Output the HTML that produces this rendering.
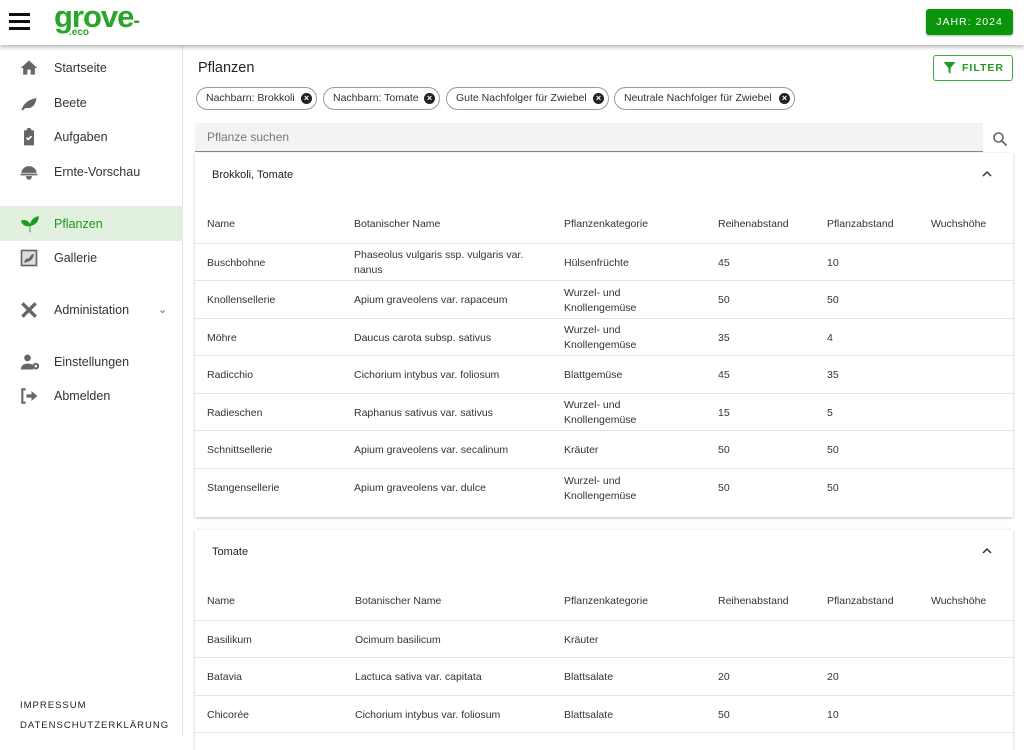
<!DOCTYPE html>
<html><head><meta charset="utf-8"><style>
*{box-sizing:border-box;margin:0;padding:0}
body{width:1024px;height:736px;overflow:hidden;background:#fff;font-family:"Liberation Sans",sans-serif;color:#222;position:relative}
.hdr{position:absolute;left:0;top:0;width:1024px;height:45px;background:#fff;box-shadow:0 2px 4px rgba(0,0,0,.3);z-index:5}
.side{position:absolute;left:0;top:45px;width:183px;height:691px;border-right:1px solid #e4e4e4}
.mi{position:absolute;left:0;width:183px;height:35px;font-size:12.5px;color:#333;display:flex;align-items:center}
.mi span{position:absolute;left:54px}
.mi svg{position:absolute;left:19px}
.act{background:#e2f1df;color:#1f9a1f}
.foot{position:absolute;left:20px;font-size:9.5px;letter-spacing:1px;color:#222}
.chip{position:absolute;top:87px;height:23px;border:1px solid #9a9a9a;border-radius:12px;font-size:10.5px;line-height:21px;padding-left:9px;color:#333;white-space:nowrap}
.chip i{position:absolute;right:4px;top:5px;width:11px;height:11px;border-radius:50%;background:#222;color:#fff;font-style:normal;font-size:9px;line-height:11px;text-align:center;font-weight:bold}
.card{position:absolute;left:195px;width:818px;background:#fff;box-shadow:0 1px 3px rgba(0,0,0,.25)}
.ct{position:absolute;left:17px;font-size:11px;color:#222}
table{position:absolute;left:0;width:818px;border-collapse:collapse;font-size:10.5px;color:#333}
td{padding:0 0 0 12px;vertical-align:middle;border-bottom:1px solid #e4e4e4;line-height:15px}
thead td{height:40px;padding-top:3px}
tbody td{height:37.5px;padding-top:3px}
</style></head><body>
<div class="hdr">
 <div style="position:absolute;left:9px;top:13px;width:21px;height:3px;background:#111;box-shadow:0 7px 0 #111,0 14px 0 #111"></div>
 <div style="position:absolute;left:54px;top:0px;font-size:31px;font-weight:bold;color:#27a627;letter-spacing:-1px;line-height:34px">grove<span style="font-size:20px">-</span></div>
 <div style="position:absolute;left:69px;top:27px;font-size:10px;color:#27a627;font-weight:bold">.eco</div>
 <div style="position:absolute;left:926px;top:9px;width:87px;height:26px;background:#0a940a;border-radius:3px;color:#fff;font-size:10.5px;letter-spacing:1px;text-align:center;line-height:26px;box-shadow:0 1px 2px rgba(0,0,0,.3)">JAHR: 2024</div>
</div>
<div class="side">
 <div class="mi" style="top:5px"><svg width="20" height="20" viewBox="0 0 24 24"><path d="M10 20v-6h4v6h5v-8h3L12 3 2 12h3v8z" fill="#666"/></svg><span>Startseite</span></div>
 <div class="mi" style="top:40px"><svg width="20" height="20" viewBox="0 0 24 24"><path d="M3 20c3-8 8-12 18-14-1 9-6 13-12 12-2 0-3 1-4 3z" fill="#666"/></svg><span>Beete</span></div>
 <div class="mi" style="top:74px"><svg width="20" height="20" viewBox="0 0 24 24"><path d="M6 4h3a3 3 0 016 0h3v18H6z" fill="#666"/><path d="M9 13l2 2 4-4" stroke="#fff" stroke-width="2" fill="none"/></svg><span>Aufgaben</span></div>
 <div class="mi" style="top:109px"><svg width="20" height="20" viewBox="0 0 24 24"><path d="M3 13a9 8 0 0118 0zM2 14h20v2H2zM8 17h8l-2 4h-4z" fill="#666"/></svg><span>Ernte-Vorschau</span></div>
 <div class="mi act" style="top:161px"><svg width="22" height="20" viewBox="0 0 24 24"><path d="M12 22v-8M12 14C6 15 2 12 2 8c5-1 9 1 10 6zM12 14c1-6 5-10 10-11 0 6-4 10-10 11z" fill="#1f9a1f" stroke="#1f9a1f"/></svg><span style="color:#1f9a1f">Pflanzen</span></div>
 <div class="mi" style="top:195px"><svg width="20" height="20" viewBox="0 0 24 24"><rect x="2" y="2" width="20" height="20" fill="#666"/><rect x="4" y="4" width="16" height="16" fill="#ddd"/><path d="M6 18c1-5 4-7 6-5 1-4 4-6 6-6-1 5-3 8-6 9z" fill="#666"/></svg><span>Gallerie</span></div>
 <div class="mi" style="top:247px"><svg width="20" height="20" viewBox="0 0 24 24"><path d="M4 4l16 16M20 4L4 20" stroke="#666" stroke-width="4"/></svg><span>Administation</span><b style="position:absolute;left:158px;font-weight:normal;color:#666;font-size:11px">&#8964;</b></div>
 <div class="mi" style="top:299px"><svg width="22" height="20" viewBox="0 0 24 24"><circle cx="9" cy="7" r="4" fill="#666"/><path d="M1 21c0-5 4-7 8-7s6 1 7 2v5z" fill="#666"/><circle cx="19" cy="17" r="4" fill="#666"/><circle cx="19" cy="17" r="1.5" fill="#fff"/></svg><span>Einstellungen</span></div>
 <div class="mi" style="top:333px"><svg width="20" height="20" viewBox="0 0 24 24"><path d="M8 4H4v16h4" stroke="#666" stroke-width="2.5" fill="none"/><path d="M9 10h6V6l7 6-7 6v-4H9z" fill="#666"/></svg><span>Abmelden</span></div>
 <div class="foot" style="top:655px">IMPRESSUM</div>
 <div class="foot" style="top:675px">DATENSCHUTZERKLÄRUNG</div>
</div>
<div style="position:absolute;left:198px;top:60px;font-size:14.5px;color:#222">Pflanzen</div>
<div style="position:absolute;left:933px;top:55px;width:80px;height:26px;border:1px solid #3aa83a;border-radius:3px;color:#1f9a1f;font-size:10.5px;font-weight:bold;letter-spacing:1px;line-height:24px;padding-left:28px">FILTER<svg style="position:absolute;left:9px;top:6px" width="13" height="12" viewBox="0 0 12 12"><path d="M0 0h12L7 6v6L5 10V6z" fill="#1f9a1f"/></svg></div>
<div class="chip" style="left:196px;width:121px">Nachbarn: Brokkoli<i>×</i></div>
<div class="chip" style="left:323px;width:117px">Nachbarn: Tomate<i>×</i></div>
<div class="chip" style="left:446px;width:163px">Gute Nachfolger für Zwiebel<i>×</i></div>
<div class="chip" style="left:614px;width:181px">Neutrale Nachfolger für Zwiebel<i>×</i></div>
<div style="position:absolute;left:195px;top:123px;width:788px;height:29px;background:#f3f3f3;border-bottom:1px solid #888;font-size:12px;color:#777;line-height:28px;padding-left:12px">Pflanze suchen</div>
<svg style="position:absolute;left:992px;top:131px" width="16" height="16" viewBox="0 0 16 16"><circle cx="6.5" cy="6.5" r="4.5" stroke="#666" stroke-width="1.6" fill="none"/><path d="M10 10l4.5 4.5" stroke="#666" stroke-width="1.8"/></svg>

<div class="card" style="top:153px;height:364px">
 <div class="ct" style="top:16px">Brokkoli, Tomate</div>
 <svg style="position:absolute;right:21px;top:17px" width="10" height="8" viewBox="0 0 10 8"><path d="M1 6l4-4 4 4" stroke="#333" stroke-width="1.5" fill="none"/></svg>
 <table style="top:50px">
  <colgroup><col style="width:147px"><col style="width:210px"><col style="width:154px"><col style="width:109px"><col style="width:104px"><col></colgroup>
  <thead><tr><td>Name</td><td>Botanischer Name</td><td>Pflanzenkategorie</td><td>Reihenabstand</td><td>Pflanzabstand</td><td>Wuchshöhe</td></tr></thead>
  <tbody>
  <tr><td>Buschbohne</td><td>Phaseolus vulgaris ssp. vulgaris var.<br>nanus</td><td>Hülsenfrüchte</td><td>45</td><td>10</td><td></td></tr>
  <tr><td>Knollensellerie</td><td>Apium graveolens var. rapaceum</td><td>Wurzel- und<br>Knollengemüse</td><td>50</td><td>50</td><td></td></tr>
  <tr><td>Möhre</td><td>Daucus carota subsp. sativus</td><td>Wurzel- und<br>Knollengemüse</td><td>35</td><td>4</td><td></td></tr>
  <tr><td>Radicchio</td><td>Cichorium intybus var. foliosum</td><td>Blattgemüse</td><td>45</td><td>35</td><td></td></tr>
  <tr><td>Radieschen</td><td>Raphanus sativus var. sativus</td><td>Wurzel- und<br>Knollengemüse</td><td>15</td><td>5</td><td></td></tr>
  <tr><td>Schnittsellerie</td><td>Apium graveolens var. secalinum</td><td>Kräuter</td><td>50</td><td>50</td><td></td></tr>
  <tr><td style="border:0">Stangensellerie</td><td style="border:0">Apium graveolens var. dulce</td><td style="border:0">Wurzel- und<br>Knollengemüse</td><td style="border:0">50</td><td style="border:0">50</td><td style="border:0"></td></tr>
  </tbody></table>
</div>

<div class="card" style="top:530px;height:220px">
 <div class="ct" style="top:16px">Tomate</div>
 <svg style="position:absolute;right:21px;top:17px" width="10" height="8" viewBox="0 0 10 8"><path d="M1 6l4-4 4 4" stroke="#333" stroke-width="1.5" fill="none"/></svg>
 <table style="top:50px">
  <colgroup><col style="width:148px"><col style="width:209px"><col style="width:154px"><col style="width:109px"><col style="width:104px"><col></colgroup>
  <thead><tr><td>Name</td><td>Botanischer Name</td><td>Pflanzenkategorie</td><td>Reihenabstand</td><td>Pflanzabstand</td><td>Wuchshöhe</td></tr></thead>
  <tbody>
  <tr><td>Basilikum</td><td>Ocimum basilicum</td><td>Kräuter</td><td></td><td></td><td></td></tr>
  <tr><td>Batavia</td><td>Lactuca sativa var. capitata</td><td>Blattsalate</td><td>20</td><td>20</td><td></td></tr>
  <tr><td>Chicorée</td><td>Cichorium intybus var. foliosum</td><td>Blattsalate</td><td>50</td><td>10</td><td></td></tr>
  </tbody></table>
</div>
</body></html>
